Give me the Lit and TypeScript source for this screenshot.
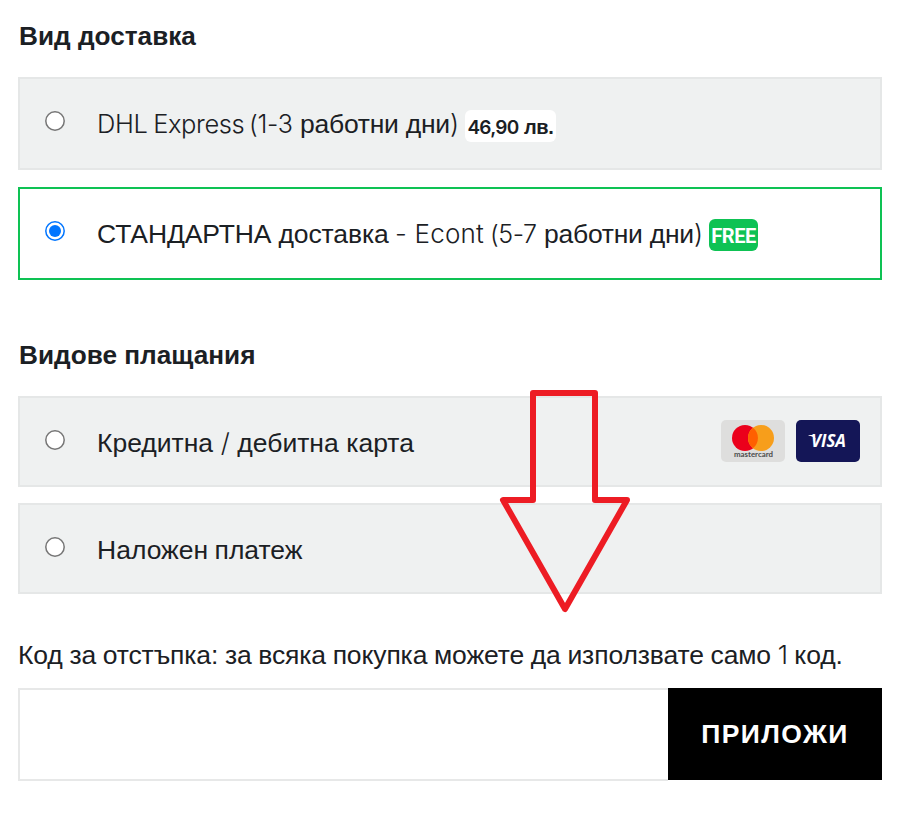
import { LitElement, html, svg, css } from "lit";
import { customElement, property } from "lit/decorators.js";

@customElement("radio-dot")
class RadioDot extends LitElement {
  @property({ type: Boolean }) checked = false;
  static styles = css`
    :host { display: block; width: 20px; height: 20px; }
    .dot { display: block; }
  `;
  render() {
    return html`<svg class="dot" width="20" height="20" viewBox="0 0 20 20">
      <circle cx="10" cy="10" r="9.2" fill="#fff" stroke=${this.checked ? "#0075ff" : "#767676"} stroke-width="1.5" />
      ${this.checked ? svg`<circle cx="10" cy="10" r="6" fill="#0075ff" />` : ""}
    </svg>`;
  }
}

@customElement("option-row")
class OptionRow extends LitElement {
  @property({ type: Boolean }) checked = false;
  static styles = css`
    :host {
      display: flex; box-sizing: border-box; width: 864px; height: 91px;
      border: 2px solid #e5e7e7; background: #eff1f1; align-items: flex-start;
      padding: 0 20px 0 25px;
    }
    :host([checked]) { border-color: #0ec254; background: #fff; }
    :host([tall]) { height: 93px; }
    .radio { margin-top: 32px; }
    .label { margin-left: 32px; flex: 1; display: flex; align-items: baseline; padding-top: 29px; line-height: 32px; white-space: pre; }
    .cards { display: flex; gap: 11px; margin-top: 22px; }
  `;
  render() {
    return html`<radio-dot class="radio" ?checked=${this.checked}></radio-dot>
      <div class="label"><slot></slot></div>
      <div class="cards"><slot name="cards"></slot></div>`;
  }
}

@customElement("app-root")
class AppRoot extends LitElement {
  static styles = css`
    :host {
      display: block; position: relative; box-sizing: border-box; width: 900px; height: 816px;
      padding: 20px 18px 0; background: #fff; color: #1b2024; overflow: hidden;
      font: 26.5px/32px "Liberation Sans", Arial, sans-serif;
    }
    .title { margin: 0; font-size: 26.2px; font-weight: 700; line-height: 32px; padding-left: 1px; height: 32px; white-space: nowrap; }
    .group { display: grid; }
    .shipping { margin-top: 25px; gap: 17px; height: 203px; }
    .payments { margin-top: 25px; gap: 16px; }
    .second { margin-top: 59px; }
    .geo { font-family: Inter, "Liberation Sans", sans-serif; font-weight: 300; font-size: 26px; }
    .dhl { width: 152px; font-size: 25.5px; letter-spacing: -0.4px; word-spacing: -1px; }
    .range { width: 51px; font-size: 25px; letter-spacing: -0.3px; word-spacing: -2px; }
    .days { width: 150px; letter-spacing: -0.25px; }
    .close { width: 8px; }
    .standard { width: 298px; letter-spacing: -0.12px; }
    .econt { width: 95px; letter-spacing: 0.2px; }
    .range2 { width: 54px; font-size: 25px; letter-spacing: -0.4px; word-spacing: -2px; }
    .badge {
      align-self: flex-start; box-sizing: border-box; height: 32px; border-radius: 6px;
      font: 700 20px/34px "Liberation Sans", Arial, sans-serif; text-align: center;
    }
    .price { width: 91px; margin: 2px 0 0 7px; background: #fff; letter-spacing: -0.3px; }
    .price .num { font-family: Inter, sans-serif; font-size: 19px; font-weight: 600; letter-spacing: -0.7px; }
    .free { width: 49px; margin: 1px 0 0 7px; background: #0ec254; color: #fff; font-family: Roboto, sans-serif; letter-spacing: -0.5px; }
    .card { display: block; }
    .credit { word-spacing: 0.2px; }
    .cash { word-spacing: -1px; }
    .note { margin: 45px 0 0; height: 32px; white-space: nowrap; letter-spacing: -0.12px; word-spacing: -0.55px; }
    .one { display: inline-block; width: 10px; letter-spacing: 0; word-spacing: 0; }
    .coupon { display: flex; margin-top: 17px; height: 93px; }
    .field { box-sizing: border-box; width: 650px; height: 93px; border: 2px solid #e7e8e8; border-right: 0; background: #fff; padding: 0 20px; outline: 0; border-radius: 0; }
    .apply { width: 214px; height: 92px; border: 0; padding: 0; background: #000; color: #fff; font: 700 26.5px/92px "Liberation Sans", Arial, sans-serif; letter-spacing: 1.4px; }
    .arrow { position: absolute; left: 490px; top: 380px; }
  `;
  render() {
    return html`
      <h2 class="title">Вид доставка</h2>
      <div class="group shipping">
        <option-row tall><span class="geo dhl">DHL Express </span><span class="geo range">(1-3 </span><span class="days">работни дни</span><span class="geo close">)</span><span class="badge price"><span class="num">46,90</span> лв.</span></option-row>
        <option-row tall checked><span class="standard">СТАНДАРТНА доставка </span><span class="geo econt">- Econt </span><span class="geo range2">(5-7 </span><span class="days">работни дни</span><span class="geo close">)</span><span class="badge free">FREE</span></option-row>
      </div>
      <h2 class="title second">Видове плащания</h2>
      <div class="group payments">
        <option-row><span class="credit">Кредитна <span class="geo">/</span> дебитна карта</span>
          <svg slot="cards" class="card" width="64" height="42" viewBox="0 0 64 42">
            <rect width="64" height="42" rx="5" fill="#dededd" />
            <circle cx="24" cy="18" r="13" fill="#eb001b" />
            <circle cx="40" cy="18" r="13" fill="#f79e1b" />
            <path d="M32 7.8a13 13 0 0 1 0 20.4a13 13 0 0 1 0-20.4z" fill="#ff5f00" />
            <text x="13" y="37" textLength="39" lengthAdjust="spacingAndGlyphs" font-family="Lato, sans-serif" font-size="7.5" font-weight="700" fill="#4b4b4b">mastercard</text>
          </svg>
          <svg slot="cards" class="card" width="64" height="42" viewBox="0 0 64 42">
            <rect width="64" height="42" rx="5" fill="#141657" />
            <text x="15" y="27" textLength="35" lengthAdjust="spacingAndGlyphs" font-family="Open Sans, sans-serif" font-size="17" font-weight="700" font-style="italic" fill="#fff">VISA</text>
            <path d="M12.5 15H18l2 5C18 17 15.500 16 12.500 15.500z" fill="#fff" />
          </svg>
        </option-row>
        <option-row><span class="cash">Наложен платеж</span></option-row>
      </div>
      <p class="note">Код за отстъпка: за всяка покупка можете да използвате само <span class="geo one">1</span> код.</p>
      <div class="coupon"><input class="field" aria-label="Код за отстъпка" /><button class="apply">ПРИЛОЖИ</button></div>
      <svg class="arrow" width="150" height="240" viewBox="0 0 150 240">
        <path d="M43 13H105V120H137L75 229L13 120H43z" fill="none" stroke="#ed1c24" stroke-width="6" stroke-linejoin="round" />
      </svg>
    `;
  }
}
